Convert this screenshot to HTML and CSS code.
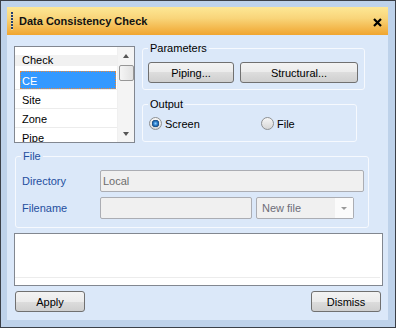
FILE: index.html
```html
<!DOCTYPE html>
<html lang="en">
<head>
    <meta charset="UTF-8">
    <title>Data Consistency Check</title>
    <link rel="stylesheet" href="styles.css">
</head>
<body>
    <div class="window">
        <div class="titlebar">
            <span class="grip"></span>
            <span class="title">Data Consistency Check</span>
            <svg class="close" width="9" height="9" viewBox="0 0 9 9">
                <path d="M1 1L8 8M8 1L1 8" stroke="#000" stroke-width="2.2" fill="none"/>
            </svg>
        </div>

        <div class="content">
            <div class="top">
                <div class="list">
                    <div class="list-items">
                        <div class="list-head">Check</div>
                        <div class="row selected"><span>CE</span></div>
                        <div class="row"><span>Site</span></div>
                        <div class="row"><span>Zone</span></div>
                        <div class="row"><span>Pipe</span></div>
                    </div>
                    <div class="scrollbar">
                        <span class="arrow-box"><span class="arrow up"></span></span>
                        <span class="thumb"></span>
                        <span class="track"></span>
                        <span class="arrow-box"><span class="arrow down"></span></span>
                    </div>
                </div>

                <div class="side">
                    <fieldset class="group params">
                        <legend>Parameters</legend>
                        <div class="btn-row">
                            <button class="btn piping">Piping...</button>
                            <button class="btn structural">Structural...</button>
                        </div>
                    </fieldset>

                    <fieldset class="group output">
                        <legend>Output</legend>
                        <div class="radio-row">
                            <label class="radio first"><span class="dot checked"></span>Screen</label>
                            <label class="radio"><span class="dot"></span>File</label>
                        </div>
                    </fieldset>
                </div>
            </div>

            <fieldset class="group file">
                <legend>File</legend>
                <div class="file-grid">
                    <span class="field-label">Directory</span>
                    <div class="input">Local</div>
                    <span class="field-label">Filename</span>
                    <div class="file-row">
                        <div class="input name"></div>
                        <div class="combo">
                            <span class="combo-text">New file</span>
                            <span class="combo-btn"><span class="caret"></span></span>
                        </div>
                    </div>
                </div>
            </fieldset>

            <div class="log"><div class="log-inner"></div></div>

            <div class="actions">
                <button class="btn action">Apply</button>
                <button class="btn action">Dismiss</button>
            </div>
        </div>
    </div>
</body>
</html>
```

FILE: styles.css
```css
* {
    box-sizing: border-box;
}

body {
    margin: 0;
    font-family: "Liberation Sans", Arial, sans-serif;
    font-size: 11px;
    color: #000;
}

.window {
    width: 396px;
    height: 328px;
    border: 1px solid #3b4048;
    background: #bed2ea;
    padding: 6px 7px 7px 6px;
    display: flex;
    flex-direction: column;
}

/* title bar */
.titlebar {
    height: 28px;
    flex-shrink: 0;
    display: flex;
    align-items: center;
    padding-left: 4px;
    background: linear-gradient(#fde795, #f9d57a 40%, #f0a52f);
}

.grip {
    width: 2px;
    height: 18px;
    background: repeating-linear-gradient(#24406e 0 2px, #e9d9a8 2px 3px);
}

.title {
    margin-left: 6px;
    font-weight: bold;
    line-height: 13px;
    color: #111;
}

.close {
    margin-left: auto;
    margin-right: 6px;
    margin-top: 2px;
}

/* body */
.content {
    flex: 1;
    background: #dbe8f9;
    padding: 7px 5px 8px 7px;
    display: flex;
    flex-direction: column;
}

.top {
    display: flex;
    align-items: flex-start;
}

.list {
    margin-top: 4px;
    width: 121px;
    height: 97px;
    border: 1px solid #828790;
    background: #fff;
    display: flex;
    overflow: hidden;
}

.list-items {
    flex: 1;
}

.list-head {
    height: 24px;
    padding: 7px 0 0 7px;
    line-height: 13px;
    background: linear-gradient(#fff 0 8px, #f1f1f1 8px 19px, #fff 19px);
}

.row {
    height: 19px;
    border-bottom: 1px solid #ececec;
}

.row span {
    display: block;
    height: 18px;
    margin-left: 5px;
    margin-right: 1px;
    padding: 4px 0 0 2px;
    line-height: 13px;
}

.row.selected span {
    background: #3399ff;
    color: #fff;
    outline: 1px dotted #e8893a;
    outline-offset: -1px;
}

.scrollbar {
    width: 17px;
    display: flex;
    flex-direction: column;
    align-items: center;
    background: #f4f4f4;
    border-left: 1px solid #f0f0f0;
}

.arrow-box {
    height: 18px;
    display: flex;
    align-items: center;
    justify-content: center;
}

.arrow {
    width: 0;
    height: 0;
    border-left: 3px solid transparent;
    border-right: 3px solid transparent;
}

.arrow.up {
    border-bottom: 4px solid #555;
}

.arrow.down {
    border-top: 4px solid #555;
    margin-top: 2px;
}

.thumb {
    width: 15px;
    height: 16px;
    border: 1px solid #979797;
    border-radius: 2px;
    background: linear-gradient(to right, #f5f5f5, #e2e2e2);
}

.track {
    flex: 1;
}

/* groups */
.side {
    margin-left: 7px;
    display: flex;
    flex-direction: column;
}

.group {
    margin: 0;
    border: 1px solid #f6f9fe;
    border-radius: 3px;
    min-width: 0;
}

.group legend {
    padding: 0 2px;
    line-height: 13px;
}

.params {
    width: 223px;
    padding: 7px 6px 6px 5px;
}

.btn-row {
    display: flex;
    gap: 6px;
}

.btn {
    height: 21px;
    padding: 0;
    border: 1px solid #707070;
    border-radius: 3px;
    background: linear-gradient(#f3f3f3, #ebebeb 50%, #dddddd 50%, #cfcfcf);
    font-family: inherit;
    font-size: 11px;
    color: #000;
}

.piping {
    width: 86px;
}

.structural {
    width: 118px;
}

.output {
    width: 215px;
    margin-top: 8px;
    padding: 6px 5px 11px 5px;
}

.radio-row {
    display: flex;
    height: 13px;
    align-items: center;
}

.radio {
    display: flex;
    align-items: center;
    gap: 3px;
}

.radio.first {
    width: 112px;
    margin-left: 1px;
}

.dot {
    width: 13px;
    height: 13px;
    border-radius: 50%;
    border: 1px solid #8e9092;
    background: linear-gradient(#f6f6f6, #d6d6d6);
}

.dot.checked {
    background: radial-gradient(circle, #8fd0ff 0, #2a7bc9 2px, #1b4a7e 3.5px, transparent 4px),
                linear-gradient(#f6f6f6, #d6d6d6);
}

.file {
    width: 354px;
    margin-top: 7px;
    margin-left: 1px;
    padding: 7px 4px 8px 5px;
}

.file legend,
.field-label {
    color: #1f4f9f;
}

.file-grid {
    display: grid;
    grid-template-columns: 79px 264px;
    row-gap: 5px;
    align-items: center;
}

.field-label {
    padding-left: 1px;
}

.input {
    height: 22px;
    border: 1px solid #abadb3;
    border-radius: 2px;
    background: #f0f0f0;
    padding-left: 2px;
    line-height: 20px;
    color: #6d6d6d;
}

.file-row {
    display: flex;
    gap: 4px;
}

.input.name {
    width: 152px;
}

.combo {
    width: 98px;
    height: 22px;
    border: 1px solid #abadb3;
    border-radius: 2px;
    background: #f0f0f0;
    display: flex;
    line-height: 20px;
    color: #6d6d78;
}

.combo-text {
    flex: 1;
    padding-left: 5px;
}

.combo-btn {
    width: 18px;
    background: #fbfbfb;
    display: flex;
    align-items: center;
    justify-content: center;
}

.caret {
    width: 0;
    height: 0;
    border-left: 3px solid transparent;
    border-right: 3px solid transparent;
    border-top: 3px solid #999;
    margin-top: 1px;
}

/* log box and buttons */
.log {
    margin-top: 5px;
    height: 53px;
    border: 1px solid #828790;
    background: #fff;
}

.log-inner {
    height: 44px;
    margin-right: 2px;
    border-bottom: 1px solid #ececec;
}

.actions {
    margin-top: 5px;
    display: flex;
    justify-content: space-between;
    padding: 0 2px 0 1px;
}

.action {
    width: 70px;
}
```
